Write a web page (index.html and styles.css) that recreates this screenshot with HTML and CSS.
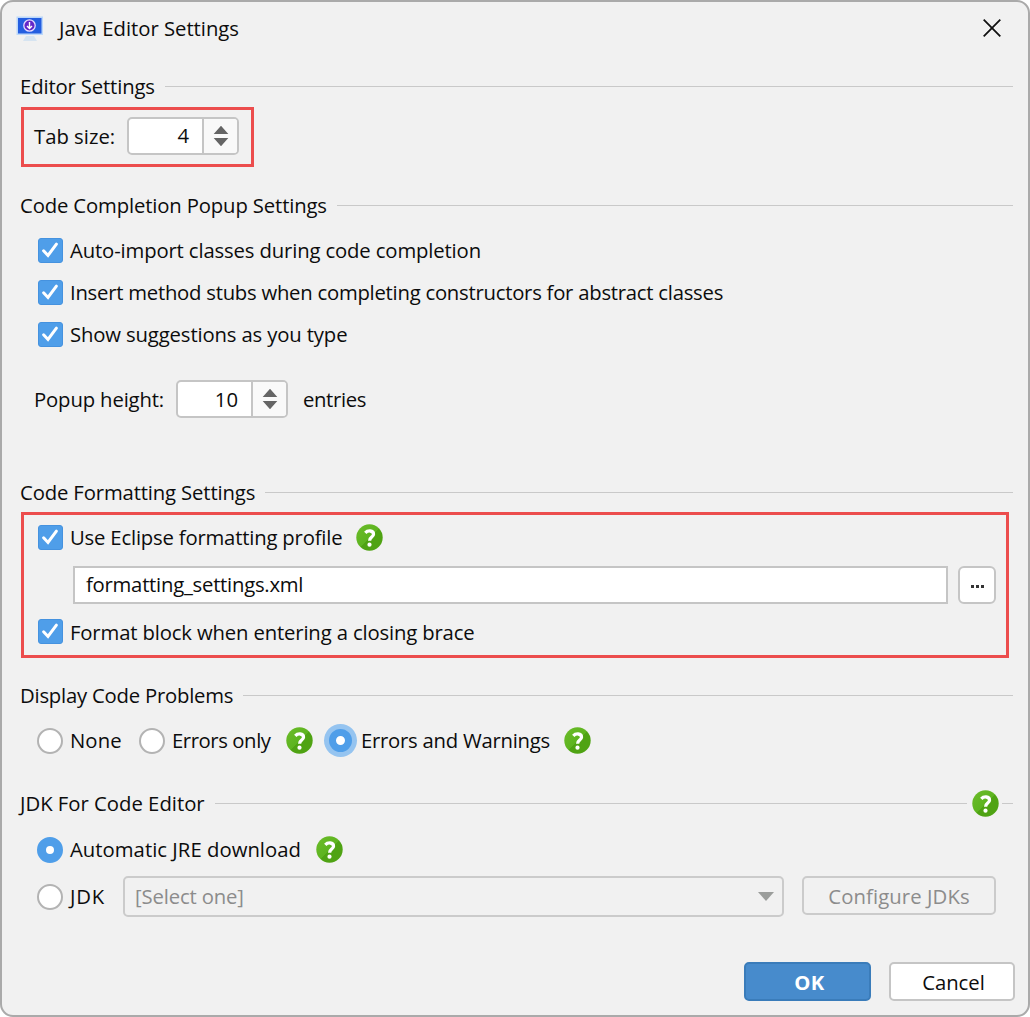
FILE: index.html
```html
<!DOCTYPE html>
<html lang="en">
<head>
<meta charset="utf-8">
<title>Java Editor Settings</title>
<link rel="stylesheet" href="styles.css">
</head>
<body>
<svg class="defs" width="0" height="0" aria-hidden="true">
  <defs>
    <linearGradient id="green" x1="0" y1="0" x2="1" y2="1">
      <stop offset="0" stop-color="#6cbc2a"/><stop offset=".5" stop-color="#5db41f"/><stop offset=".5" stop-color="#4fa313"/><stop offset="1" stop-color="#4fa313"/>
    </linearGradient>
    <symbol id="help" viewBox="0 0 27 27">
      <circle cx="13.5" cy="13.5" r="13.2" fill="url(#green)"/>
      <path d="M9.3 8.8C11.600 6.300 17.500 6 17.500 10.200C17.500 13.200 13.600 13 13.600 16.700" fill="none" stroke="#fff" stroke-width="3.300"/>
      <circle cx="13.500" cy="20.700" r="2.100" fill="#fff"/>
    </symbol>
    <symbol id="check" viewBox="0 0 25 25">
      <path d="M5.6 12.8L10 17.5L18.4 6.2" fill="none" stroke="#fff" stroke-width="3" stroke-linecap="round"/>
    </symbol>
    <symbol id="arrows" viewBox="0 0 16 22">
      <path d="M8 .7L15.3 9H.7zM.7 13H15.3L8 21.3z" fill="#656565"/>
    </symbol>
  </defs>
</svg>
<main class="dialog">
  <header class="titlebar">
    <svg class="app-icon" viewBox="0 0 28 26">
      <path d="M10 20h8l3 5H7z" fill="#d6e4f1"/>
      <rect x=".5" y=".5" width="26.500" height="18.500" fill="#bcd8fa"/>
      <rect x="2" y="2" width="23.500" height="15.500" fill="#245ee0"/>
      <circle cx="13.500" cy="9.500" r="5.700" fill="#6426c8" stroke="#e6dcff" stroke-width="1.300"/>
      <path d="M13.500 6v6M11 10l2.500 2.500L16 10" fill="none" stroke="#fff" stroke-width="1.400"/>
    </svg>
    <h1 class="t title">Java Editor Settings</h1>
    <svg class="close" viewBox="0 0 18 18"><path d="M.7.7l16.600 16.600M17.300.7L.7 17.300" stroke="#111" stroke-width="1.800"/></svg>
  </header>

  <h2 class="heading"><span class="t snug">Editor Settings</span></h2>
  <section class="marked tab-size">
    <span class="t tab-label">Tab size:</span>
    <div class="spinner"><span class="value">4</span><span class="steps"><svg><use href="#arrows"/></svg></span></div>
  </section>

  <h2 class="heading completion"><span class="t snug">Code Completion Popup Settings</span></h2>
  <section class="checks">
    <label class="option"><span class="checkbox"><svg><use href="#check"/></svg></span><span class="t snug">Auto-import classes during code completion</span></label>
    <label class="option"><span class="checkbox"><svg><use href="#check"/></svg></span><span class="t tight">Insert method stubs when completing constructors for abstract classes</span></label>
    <label class="option"><span class="checkbox"><svg><use href="#check"/></svg></span><span class="t snug">Show suggestions as you type</span></label>
  </section>
  <section class="popup-height">
    <span class="t snug popup-label">Popup height:</span>
    <div class="spinner"><span class="value">10</span><span class="steps"><svg><use href="#arrows"/></svg></span></div>
    <span class="t entries">entries</span>
  </section>

  <h2 class="heading formatting"><span class="t snug">Code Formatting Settings</span></h2>
  <section class="marked profile">
    <label class="option"><span class="checkbox"><svg><use href="#check"/></svg></span><span class="t eclipse">Use Eclipse formatting profile</span><svg class="help"><use href="#help"/></svg></label>
    <div class="file-row">
      <div class="file"><span class="t tight">formatting_settings.xml</span></div>
      <button class="browse" aria-label="Browse"><i></i><i></i><i></i></button>
    </div>
    <label class="option"><span class="checkbox"><svg><use href="#check"/></svg></span><span class="t block">Format block when entering a closing brace</span></label>
  </section>

  <h2 class="heading problems"><span class="t tight">Display Code Problems</span></h2>
  <section class="problem-options">
    <label class="choice none"><span class="radio"></span><span class="t">None</span></label>
    <label class="choice errors"><span class="radio"></span><span class="t">Errors only</span></label>
    <svg class="help"><use href="#help"/></svg>
    <label class="choice warnings"><span class="radio on focus"></span><span class="t tight">Errors and Warnings</span></label>
    <svg class="help"><use href="#help"/></svg>
  </section>

  <h2 class="heading jdk-heading"><span class="t">JDK For Code Editor</span><svg class="help"><use href="#help"/></svg></h2>
  <section class="jre">
    <label class="choice auto"><span class="radio on"></span><span class="t">Automatic JRE download</span></label>
    <svg class="help"><use href="#help"/></svg>
  </section>
  <section class="jdk">
    <label class="choice"><span class="radio"></span><span class="t">JDK</span></label>
    <div class="select"><span class="t snug">[Select one]</span><svg viewBox="0 0 16 9"><path d="M0 0h16L8 9z" fill="#9b9d9b"/></svg></div>
    <button class="configure"><span class="t">Configure JDKs</span></button>
  </section>

  <footer class="actions">
    <button class="ok"><span class="t">OK</span></button>
    <button class="cancel"><span class="t">Cancel</span></button>
  </footer>
</main>
</body>
</html>
```
FILE: styles.css
```css
* { box-sizing: border-box; }

body {
  margin: 0;
  background: #fff;
  color: #0c0c0c;
  font: 20.3px/30px "Open Sans", "Noto Sans", sans-serif;
}

.defs { position: absolute; }
svg { display: block; flex: none; }
button { font: inherit; padding: 0; cursor: pointer; }
.t { white-space: nowrap; padding-bottom: 2px; }
.snug { letter-spacing: -.14px; }
.tight { letter-spacing: -.245px; }

.dialog {
  display: flex;
  flex-direction: column;
  width: 1030px;
  height: 1017px;
  padding: 0 15px 0 18px;
  border: 2px solid #aaa;
  border-radius: 13px;
  background: #f1f1f1;
  overflow: hidden;
}
.dialog > * { flex: none; }

.titlebar {
  display: flex;
  align-items: flex-start;
  height: 70px;
  margin-left: -4px;
}
.app-icon { width: 28px; height: 26px; margin-top: 14px; }
.title { margin: 11px 0 0 15px; font-size: inherit; font-weight: 400; letter-spacing: -.02px; }
.close { width: 18px; height: 18px; margin: 17px 12px 0 auto; }

.heading {
  display: flex;
  align-items: center;
  height: 29px;
  margin: 0 0 1px;
  font-size: inherit;
  font-weight: 400;
}
.heading::after { content: ""; flex: 1; height: 1px; margin-left: 10px; background: #c9c9c9; }

.marked { margin-left: 1px; border: 3px solid #ec4d4d; }

.spinner {
  display: flex;
  width: 112px;
  height: 38px;
  border: 2px solid #c5c5c5;
  border-radius: 5px;
  background: #fff;
  overflow: hidden;
}
.value { flex: 1; padding: 2px 13px 0 0; text-align: right; }
.steps {
  display: flex;
  align-items: center;
  justify-content: center;
  width: 35px;
  border-left: 2px solid #c5c5c5;
  background: #f9f9f9;
}
.steps svg { width: 16px; height: 22px; }

.tab-size {
  display: flex;
  align-items: center;
  width: 233px;
  height: 60px;
  margin-top: 5px;
  padding: 0 0 2px 10px;
}
.tab-label { width: 93px; padding-bottom: 0; }
.tab-size .value { padding-top: 1px; }

.completion { margin-top: 24px; }
.checks { display: grid; gap: 17px; margin-top: 17px; padding-left: 18px; }
.option { display: flex; align-items: center; height: 25px; }
.checkbox {
  width: 25px;
  height: 25px;
  margin-right: 7px;
  border: 1px solid #4592df;
  border-radius: 3px;
  background: #4f9ee9;
}
.checkbox svg { width: 25px; height: 25px; margin: -1px; }

.popup-height { display: flex; align-items: center; height: 38px; margin-top: 33px; padding-left: 14px; }
.popup-label { width: 142px; }
.popup-height .t { padding-bottom: 0; }
.entries { margin-left: 15px; letter-spacing: -.36px; }

.formatting { margin-top: 60px; }
.profile { width: 988px; height: 146px; margin-top: 4px; padding: 10px 10px 0 14px; }
.help { width: 27px; height: 27px; }
.eclipse { width: 286px; letter-spacing: -.19px; }
.block { padding-bottom: 0; letter-spacing: -.15px; }
.file-row { display: flex; gap: 10px; margin: 16px 0 15px 35px; }
.file {
  flex: 1;
  height: 38px;
  padding: 1px 11px;
  border: 2px solid #c5c5c5;
  background: #fff;
}
.browse {
  display: flex;
  align-items: center;
  justify-content: center;
  gap: 2px;
  width: 38px;
  height: 38px;
  padding-top: 3px;
  border: 2px solid #c5c5c5;
  border-radius: 6px;
  background: #fff;
}
.browse i { width: 3px; height: 3px; background: #333; }

.problems { margin-top: 23px; }
.problems .t { letter-spacing: -.22px; }
.problem-options { display: flex; align-items: center; height: 33px; margin-top: 13px; padding-left: 17px; }
.choice { display: flex; align-items: center; }
.radio {
  flex: none;
  width: 26px;
  height: 26px;
  margin-right: 7px;
  border: 2px solid #b3b3b3;
  border-radius: 50%;
  background: #fff;
}
.radio.on { border: 9px solid #4f9ee9; }
.radio.focus {
  width: 23px;
  height: 23px;
  margin: 5px 9px 5px 5px;
  border-width: 7px;
  box-shadow: 0 0 0 5px #95c4f0;
}
.none { width: 102px; }
.none .t { letter-spacing: .1px; }
.errors { width: 147px; }
.errors .t { letter-spacing: -.42px; }
.warnings { width: 240px; margin-left: 11px; }

.jdk-heading { margin-top: 32px; }
.jdk-heading::before { content: ""; order: 1; flex: 1; height: 1px; margin-left: 10px; background: #c9c9c9; }
.jdk-heading .help { order: 2; margin-left: 5px; }
.jdk-heading::after { order: 3; flex: none; width: 11px; margin-left: 3px; }

.jre { display: flex; align-items: center; height: 29px; margin-top: 16px; padding-left: 17px; }
.auto { width: 279px; letter-spacing: .03px; }
.jdk { display: flex; align-items: flex-start; height: 41px; margin-top: 12px; padding-left: 17px; }
.jdk .choice { width: 86px; height: 41px; letter-spacing: .8px; }
.select {
  display: flex;
  align-items: center;
  justify-content: space-between;
  width: 661px;
  height: 41px;
  padding: 0 8px 0 10px;
  border: 2px solid #cbcbcb;
  border-radius: 5px;
  color: #8c8c8c;
}
.select svg { width: 16px; height: 9px; }
.configure {
  width: 194px;
  height: 39px;
  margin-left: 18px;
  border: 2px solid #cbcbcb;
  border-radius: 5px;
  background: none;
  color: #8c8c8c;
  letter-spacing: .1px;
}
.actions { display: flex; gap: 18px; justify-content: flex-end; margin: 45px -2px 0 0; }
.ok, .cancel { height: 39px; border-radius: 5px; }
.ok { width: 127px; padding-left: 4px; border: 2px solid #3a7cba; background: #478bcc; color: #fff; font-weight: 700; letter-spacing: .5px; }
.cancel { width: 126px; padding-left: 3px; border: 2px solid #c5c5c5; background: #fff; color: #0c0c0c; }
```
